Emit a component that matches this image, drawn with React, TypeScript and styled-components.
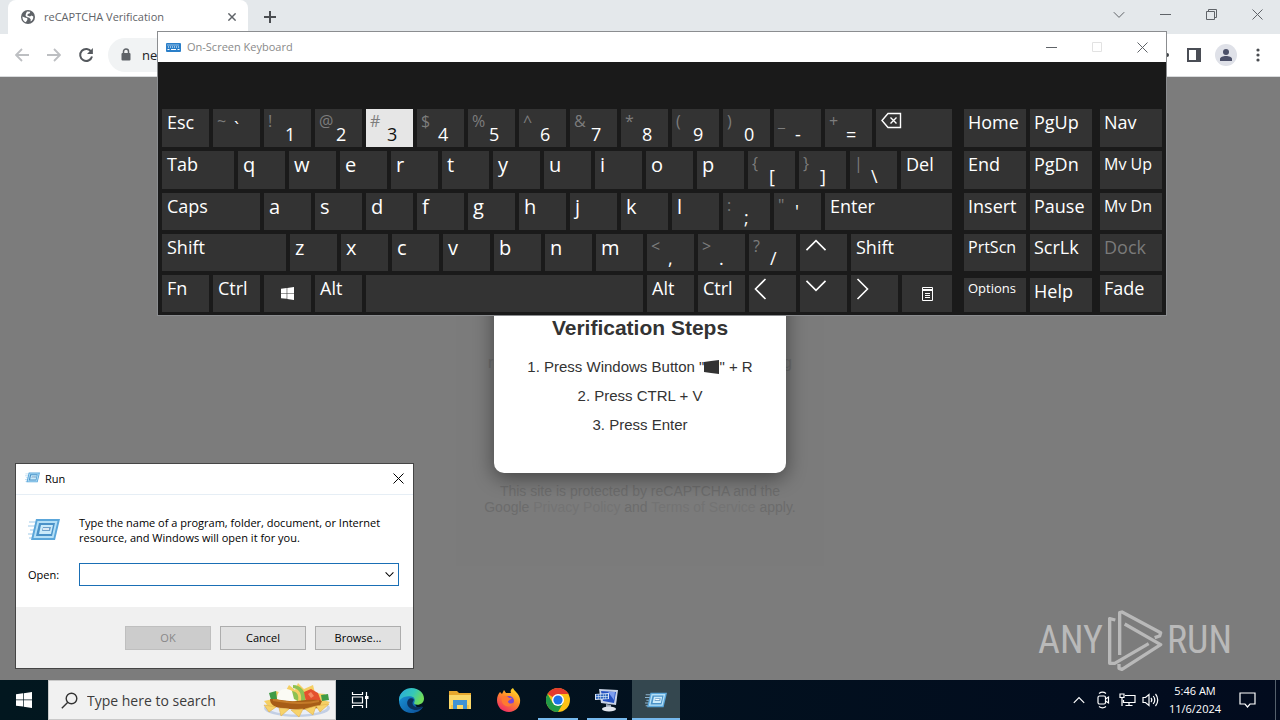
import React from "react";
import styled, { createGlobalStyle } from "styled-components";

const ui = '"Open Sans", "Noto Sans", sans-serif';
const arial = '"Liberation Sans", Arial, sans-serif';

const GlobalStyle = createGlobalStyle`
  * { box-sizing: border-box; }
  body { margin: 0; font-family: ${ui}; overflow: hidden; }
  button, input { font-family: inherit; font-size: inherit; margin: 0; padding: 0; border: 0; background: none; color: inherit; }
  h1, h2, p, ol { margin: 0; padding: 0; }
  svg { display: block; flex: none; }
`;

const Desktop = styled.div`
  position: relative;
  min-height: 100vh;
  display: flex;
  flex-direction: column;
  background: #7c7c7c;
`;

/* Browser */
const TabStrip = styled.header`
  height: 34px;
  display: flex;
  align-items: stretch;
  padding-left: 8px;
  background: #e4e8eb;
`;
const Tab = styled.div`
  width: 240px;
  display: flex;
  align-items: center;
  gap: 9px;
  padding: 0 10px 0 13px;
  background: #fff;
  border-radius: 8px 8px 0 0;
  color: #5f6368;
`;
const TabTitle = styled.span`
  flex: 1;
  font-size: 11px;
  line-height: 16px;
  white-space: nowrap;
`;
const IconButton = styled.button<{ $w?: number }>`
  width: ${(p) => p.$w ?? 32}px;
  display: flex;
  align-items: center;
  justify-content: center;
  color: #5f6368;
`;
const StripControls = styled.div`
  margin-left: auto;
  display: flex;
  height: 29px;
`;
const Toolbar = styled.nav`
  height: 43px;
  display: flex;
  align-items: center;
  padding: 0 6px;
  background: #fff;
  border-bottom: 1px solid #d9dbdd;
`;
const AddressBar = styled.label`
  flex: 1;
  height: 34px;
  display: flex;
  align-items: center;
  gap: 10px;
  margin: 0 4px 0 6px;
  padding-left: 12px;
  border-radius: 17px;
  background: #f1f3f4;
`;
const AddressInput = styled.input`
  flex: 1;
  font-size: 13px;
  color: #202124;
`;
const Avatar = styled.span`
  width: 22px;
  height: 22px;
  display: flex;
  align-items: center;
  justify-content: center;
  border-radius: 50%;
  background: #dfe1e8;
`;

/* Page */
const Page = styled.main`
  flex: 1;
  display: grid;
  place-items: center;
  font-family: ${arial};
  > * { grid-area: 1 / 1; }
`;
const Card = styled.section`
  width: 368px;
  height: 374px;
  display: flex;
  flex-direction: column;
  align-items: center;
  justify-content: flex-end;
  padding: 0 16px 51px;
  background: #7b7b7b;
  color: #6c6c6c;
  text-align: center;
`;
const CardLine = styled.p`
  width: 304px;
  display: flex;
  justify-content: space-between;
  margin-bottom: 111px;
  font-size: 16px;
  line-height: 18px;
`;
const Legal = styled.p`
  font-size: 14px;
  line-height: 16px;
  white-space: nowrap;
`;
const LegalLink = styled.a`
  color: #737373;
  text-decoration: none;
`;
const Modal = styled.section`
  width: 292px;
  height: 189px;
  padding: 31px 10px 0;
  border-radius: 10px;
  background: #fff;
  color: #333;
  text-align: center;
  box-shadow: 0 5px 20px rgba(0, 0, 0, 0.45);
`;
const ModalTitle = styled.h1`
  margin-bottom: 11px;
  font-size: 21px;
  line-height: 26px;
`;
const Steps = styled.ol`
  list-style: none;
  font-size: 15px;
  line-height: 29px;
`;
const Step = styled.li`
  display: flex;
  align-items: center;
  justify-content: center;
  white-space: pre;
`;
const Watermark = styled.div`
  position: absolute;
  right: 48px;
  bottom: 49px;
  display: flex;
  align-items: center;
  gap: 4px;
  color: #b9b9b9;
  font-family: "Liberation Sans Narrow", "Roboto Condensed", "Liberation Sans", sans-serif;
  font-size: 38px;
  line-height: 62px;
`;

/* On-screen keyboard */
const Keyboard = styled.section`
  position: absolute;
  left: 157px;
  top: 31px;
  width: 1010px;
  border: 1px solid #8b8d90;
  background: #1a1a1a;
`;
const KeyboardTitle = styled.header`
  height: 30px;
  display: flex;
  align-items: center;
  gap: 6px;
  padding-left: 8px;
  background: #fff;
  color: #8a8a8a;
  font-size: 11px;
  line-height: 16px;
`;
const WindowButtons = styled.div`
  margin-left: auto;
  display: flex;
  height: 28px;
`;
const KeyArea = styled.div`
  display: flex;
  padding: 47px 4px 3px;
`;
const KeyRows = styled.div<{ $w?: number; $ml?: number }>`
  ${(p) => (p.$w ? `width: ${p.$w}px;` : "flex: 1;")}
  margin-left: ${(p) => p.$ml ?? 0}px;
  display: grid;
  grid-template-rows: 38px 38px 37px 37px 37px;
  gap: 4px;
`;
const KeyRow = styled.div<{ $inset?: boolean }>`
  display: flex;
  gap: 4px;
  padding-top: ${(p) => (p.$inset ? 3 : 0)}px;
`;
const Key = styled.button<{ $w?: number; $size?: number; $active?: boolean; $dim?: boolean; $center?: boolean; $tight?: boolean }>`
  ${(p) => (p.$w ? `width: ${p.$w}px;` : "flex: 1;")}
  display: flex;
  align-items: ${(p) => (p.$center ? "center" : "flex-start")};
  justify-content: ${(p) => (p.$center ? "center" : "flex-start")};
  padding: 0 0 0 ${(p) => (p.$center ? 0 : p.$tight ? 4 : 5)}px;
  background: ${(p) => (p.$active ? "#e6e6e6" : "#333")};
  color: ${(p) => (p.$active ? "#111" : p.$dim ? "#7a7a7a" : "#fff")};
  font-size: ${(p) => p.$size ?? 18}px;
  line-height: ${(p) => (p.$size === 13 ? 20 : 27)}px;
  text-align: left;
  white-space: nowrap;
`;
const Shifted = styled.span`
  width: 17px;
  color: #7d7d7d;
  font-size: 16px;
  line-height: 24px;
`;
const Unshifted = styled.span<{ $high?: boolean }>`
  align-self: ${(p) => (p.$high ? "center" : "flex-end")};
  font-size: 18px;
  line-height: 25px;
`;

/* Run dialog */
const RunDialog = styled.section`
  position: absolute;
  left: 15px;
  bottom: 51px;
  width: 399px;
  border: 1px solid #454545;
  background: #fff;
  color: #000;
  font-size: 11px;
  line-height: 15px;
`;
const RunTitle = styled.header`
  height: 31px;
  display: flex;
  align-items: center;
  gap: 5px;
  padding: 0 0 2px 9px;
  border-bottom: 1px solid #e6eef5;
`;
const RunBody = styled.div`
  display: grid;
  grid-template-columns: 51px 320px;
  row-gap: 18px;
  align-items: center;
  padding: 20px 12px 21px;
`;
const ComboBox = styled.div`
  height: 23px;
  display: flex;
  align-items: center;
  padding-right: 4px;
  border: 1px solid #1a6fb5;
`;
const ComboInput = styled.input`
  flex: 1;
  height: 100%;
  padding: 0 4px;
  outline: none;
`;
const RunActions = styled.footer`
  height: 61px;
  display: flex;
  justify-content: flex-end;
  align-items: center;
  gap: 9px;
  padding-right: 12px;
  background: #f0f0f0;
`;
const DialogButton = styled.button`
  width: 86px;
  height: 24px;
  border: 1px solid #adadad;
  background: #e1e1e1;
  &:disabled { background: #ccc; border-color: #bfbfbf; color: #888; }
`;

/* Taskbar */
const Taskbar = styled.footer`
  height: 40px;
  display: flex;
  background: linear-gradient(90deg, #02171f, #020b1e);
  color: #fff;
`;
const SearchBox = styled.label`
  width: 288px;
  display: flex;
  align-items: center;
  gap: 9px;
  padding: 0 4px 0 12px;
  background: #f1f1f1;
  border: 1px solid #c9c9c9;
  color: #333;
`;
const SearchInput = styled.input`
  flex: 1;
  min-width: 0;
  font-size: 14px;
  &::placeholder { color: #3c3c3c; opacity: 1; }
`;
const TaskButton = styled.button<{ $open?: boolean; $active?: boolean }>`
  width: 48px;
  height: 40px;
  display: flex;
  align-items: center;
  justify-content: center;
  background-color: ${(p) => (p.$active ? "#34474f" : "transparent")};
  background-image: ${(p) => (p.$open || p.$active ? "linear-gradient(#76b9ed, #76b9ed)" : "none")};
  background-size: ${(p) => (p.$active ? "48px" : "40px")} 2px;
  background-position: bottom center;
  background-repeat: no-repeat;
`;
const TaskGroup = styled.div`
  display: flex;
  gap: 1px;
  margin-left: 3px;
`;
const Tray = styled.div`
  margin-left: auto;
  display: flex;
  align-items: center;
  color: #fff;
`;
const TrayButton = styled.button<{ $w?: number }>`
  width: ${(p) => p.$w ?? 24}px;
  height: 40px;
  display: flex;
  align-items: center;
  justify-content: center;
`;
const Clock = styled.time`
  width: 64px;
  font-size: 11px;
  line-height: 18px;
  text-align: center;
`;
const ShowDesktop = styled.button`
  width: 5px;
  height: 40px;
  margin-left: 8px;
  border-left: 1px solid #55606c;
`;

const stroke = { fill: "none", stroke: "currentColor" } as const;

const Cross = ({ s = 11, w = 1 }: { s?: number; w?: number }) => (
  <svg width={s} height={s} viewBox="0 0 11 11" {...stroke} strokeWidth={w}><path d="M.5.5l10 10M10.5.5l-10 10" /></svg>
);
const Minus = () => <svg width="11" height="11" {...stroke}><path d="M0 5.5h11" /></svg>;
const Chevron = ({ dir, s = 12, w = 1.2 }: { dir: "up" | "down"; s?: number; w?: number }) => (
  <svg width={s} height={s} viewBox="0 0 12 12" {...stroke} strokeWidth={w}>
    <path d={dir === "down" ? "M.8 3.2L6 8.4l5.2-5.2" : "M.8 8.8L6 3.6l5.2 5.2"} />
  </svg>
);
const SideArrow = ({ dir }: { dir: "left" | "right" }) => (
  <svg width="13" height="26" viewBox="0 0 13 26" {...stroke} strokeWidth="1.6">
    <path d={dir === "left" ? "M11.500 4L1.500 14l10 10" : "M1.500 4l10 10-10 10"} />
  </svg>
);
const WinLogo = ({ s }: { s: number }) => (
  <svg width={s} height={s} viewBox="0 0 16 16" fill="currentColor">
    <path d="M0 2.2L7 1.3v6.3H0zM7.7 1.2L16 0v7.6H7.7zM0 8.3h7v6.3l-7-.9zM7.7 8.3H16V16l-8.3-1.2z" />
  </svg>
);
const RunIcon = ({ w }: { w: number }) => (
  <svg width={w} height={w * 0.75} viewBox="0 0 32 24">
    <path d="M1 4h9M0 8h8M2 12h5M0 16h5M1 20h4" stroke="#9fcbea" strokeWidth="1.2" />
    <path d="M8 1h24l-5 21H3z" fill="#5aa6da" />
    <path d="M9.5 3h20l-4 17H5.5z" fill="#b4dff6" />
    <path d="M11 5h16l-3 13H8z" fill="#4a92c8" />
    <path d="M13 7h12l-2 9H11z" fill="#c9eafa" />
    <path d="M15 9h8l-1 4h-8z" fill="#6c9fc9" />
    <path d="M15 11h6" stroke="#fff" strokeWidth="1.5" />
  </svg>
);
const Globe = () => (
  <svg width="14" height="14" viewBox="0 0 14 14">
    <circle cx="7" cy="7" r="7" fill="#5f6368" />
    <path d="M1.4 6.5l3 1.2 1.8.4.2 1.7-1.6 2.4C2.7 11.500 1.300 9.300 1.400 6.500zM6 1.600l3.200.2-.4 1.500-2 .7-.5 1.600 2.700.8 1.500-.8 1.800.8c.2 2.300-1 4.200-2.700 5.100l.1-2.200-1.400-1.600-2.600-.8-1.200-1.500L5 3.600z" fill="#fff" />
  </svg>
);
const Arrow = ({ back }: { back?: boolean }) => (
  <svg width="14" height="14" viewBox="0 0 14 14" fill="none" stroke="#bdbfc2" strokeWidth="1.8">
    <path d={back ? "M14 7H1.500M7 1L1 7l6 6" : "M0 7h12.500M7 1l6 6-6 6"} />
  </svg>
);
const Reload = () => (
  <svg width="16" height="16" viewBox="0 0 16 16" fill="none" stroke="#55595e" strokeWidth="2">
    <path d="M13.300 4.800A6 6 0 1 0 14 9.500" /><path d="M14.900 1v6H9z" fill="#55595e" stroke="none" />
  </svg>
);
const Lock = () => (
  <svg width="12" height="14" viewBox="0 0 12 14">
    <path d="M3.500 6V3.500a2.500 2.500 0 0 1 5 0V6" fill="none" stroke="#5f6368" strokeWidth="1.500" />
    <rect x="1.500" y="5" width="9" height="7.500" rx="1" fill="#5f6368" />
  </svg>
);
const KeyboardIcon = () => (
  <svg width="15" height="9" viewBox="0 0 15 9">
    <rect width="15" height="9" rx="1" fill="#2a7fc9" />
    <path d="M1.500 2h12M2 4h11.500" stroke="#fff" strokeDasharray="1 1" /><path d="M1.500 6.500h2M5 6.500h5M11.500 6.500h2" stroke="#fff" />
  </svg>
);
const Backspace = () => (
  <svg width="21" height="24" viewBox="0 0 21 24" {...stroke} strokeWidth="1.400">
    <path d="M1 11.500L7 4.500h12.500v14H7zM9.500 8.500l6 6M15.500 8.500l-6 6" />
  </svg>
);
const MenuIcon = () => (
  <svg width="11" height="14" viewBox="0 0 11 14" {...stroke}>
    <path d="M.5.5h10v13H.5zM.5 2.500h10M.5 3.500h10M3 6.500h5M3 8.500h5M3 10.500h5" />
  </svg>
);
const Search = () => (
  <svg width="17" height="17" viewBox="0 0 17 17" {...stroke} strokeWidth="1.400">
    <circle cx="10.500" cy="6.500" r="5.300" /><path d="M6.800 10.300L.8 16.300" />
  </svg>
);
const Nachos = () => (
  <svg width="68" height="36" viewBox="0 0 68 36">
    <ellipse cx="34" cy="26" rx="33" ry="9" fill="#c3cfe4" />
    <ellipse cx="34" cy="25" rx="30" ry="7.500" fill="#e9eef7" />
    <path d="M1 19l9-2 3-8 8 3 5-9 6 5 3-7 6 6 9-4 2 8 10 1-2 6 7 2-5 5H6z" fill="#f5cf63" />
    <path d="M6 11l7-2 1 8-6 1zM58 13l7-1 1 6-7 1z" fill="#3f9b46" />
    <path d="M14 17c0-10 8-12 15-8l6 9-12 4z" fill="#fbfbf4" />
    <path d="M30 3c8 0 14 7 12 16h-4C39 11 36 7 30 6zM29 9c6 1 7 5 6 10l-4-2z" fill="#8dc152" />
    <path d="M41 10l7-3 7 4 3 8-15 1z" fill="#e4502e" /><path d="M45 12l3-2 3 4-3 2z" fill="#f58a62" />
    <path d="M7 17c10 0 16 3 27 2s18-2 25 0l-3 7-20 2-19-2c-6-1-10-4-10-9z" fill="#a75d17" />
    <path d="M10 18c12 2 30 5 46 1" stroke="#c47a28" strokeWidth="2" fill="none" />
    <path d="M1 23l12 2-7 5zM16 26l10 1-8 7zM28 28l12-1-4 8zM42 27l11-3-3 9zM53 24l13-2-9 8z" fill="#f7d36b" stroke="#e2b04a" strokeWidth=".6" />
  </svg>
);
const TaskView = () => (
  <svg width="18" height="16" viewBox="0 0 18 16" {...stroke} strokeWidth="1.200">
    <path d="M1.500 0v2.500h10V0M1.500 5h10v6h-10zM1.500 16v-2.500h10V16M15.500 0v16" /><path d="M14 4h3.500v3H14z" fill="currentColor" stroke="none" />
  </svg>
);
const Edge = () => (
  <svg width="25" height="25" viewBox="0 0 24 24">
    <defs>
      <linearGradient id="edgeTop" x1="0" y1="0" x2="1" y2=".4"><stop offset="0" stopColor="#2aa8e0" /><stop offset=".6" stopColor="#35c8b8" /><stop offset="1" stopColor="#6fdc5a" /></linearGradient>
      <linearGradient id="edgeBase" x1="0" y1="0" x2="1" y2="1"><stop offset="0" stopColor="#1b9de0" /><stop offset="1" stopColor="#0b4a92" /></linearGradient>
    </defs>
    <path d="M0 12C0 5 5 1 12 1s9 6 9 10l-5 4c-1 3 3 5 7 3-2 4-6 6-11 6C5 24 0 19 0 12z" fill="url(#edgeBase)" />
    <path d="M0 11C1 4 6 0 12 0c7 0 12 5 12 10 0 4-3 6-6.500 6-2 0-3.500-.8-3-1.800 1.500-2.500.5-6.200-4-6.200C6 8 2 9 0 13z" fill="url(#edgeTop)" />
    <path d="M9 11c-3 4 0 9 6 10 3 .4 5-.5 7-2 .8-.7.500-1.500-.500-1.200-4 1.500-8 .2-8.500-2.800-.2-1.600.8-2.500 1.300-3.500C14 9.500 10.500 9 9 11z" fill="#0b2f5c" />
  </svg>
);
const Folder = () => (
  <svg width="22" height="20" viewBox="0 0 22 20">
    <path d="M0 1h8l2 2h12v16H0z" fill="#e7a82e" /><path d="M0 5h22v14H0z" fill="#fbd869" />
    <path d="M4 10h14v9h-4v-4H8v4H4z" fill="#3f93d6" /><path d="M2 15h2v4H2zM18 15h2v4h-2z" fill="#f3c44a" />
  </svg>
);
const Firefox = () => (
  <svg width="24" height="24" viewBox="0 0 24 24">
    <defs><linearGradient id="fox" x1=".8" y1="0" x2=".2" y2="1"><stop offset="0" stopColor="#ffe226" /><stop offset=".45" stopColor="#ff8a2a" /><stop offset="1" stopColor="#f0246b" /></linearGradient></defs>
    <path d="M3 4l2 2 2-4 2 3 5 0c-1-2 0-4 2-5 1 3 6 5 7 11 1 7-4 13-11 13S0 19 0 12c0-3 1-6 3-8z" fill="url(#fox)" />
    <circle cx="12" cy="13" r="5" fill="#7746d8" /><path d="M5 9c3-2 6-1 7 1l3 0c-1 2-4 2-4 4 1 2 4 2 6 0-1 5-8 6-11 2-1-2-2-4-1-7z" fill="#ff7a30" />
  </svg>
);
const Chrome = () => (
  <svg width="24" height="24" viewBox="0 0 24 24">
    <circle cx="12" cy="12" r="12" fill="#fbc116" />
    <path d="M12 12L1.600 6A12 12 0 0 1 22.400 6H12z" fill="#e33b2e" />
    <path d="M1.600 6A12 12 0 0 0 12 24l5.200-9L12 12 6.800 15z" fill="#229a48" />
    <circle cx="12" cy="12" r="6" fill="#fff" /><circle cx="12" cy="12" r="4.600" fill="#1c73e8" />
  </svg>
);
const OskApp = () => (
  <svg width="24" height="24" viewBox="0 0 24 24">
    <path d="M4 1l19 1-2 15-15-2z" fill="#c9d3e6" /><path d="M6 3l15 1-2 11-11-2z" fill="#2450c0" /><path d="M13 4l7 0-1 8z" fill="#7c9df0" />
    <path d="M0 6l14-1v6L0 12z" fill="#dbe6f6" /><path d="M1 7.500l12-.5M1 10l12-.5" stroke="#2f67bd" strokeWidth="1.800" strokeDasharray="2 .5" />
    <path d="M11 16l5 1v3h-5z" fill="#9ba6b8" /><ellipse cx="14" cy="21" rx="7" ry="2.500" fill="#dfe4ec" />
  </svg>
);
const Camera = () => (
  <svg width="14" height="18" viewBox="0 0 14 18" {...stroke} strokeWidth="1.200">
    <path d="M3 2.500C5 1 8 1 10 2.500M3 15.500c2 1.500 5 1.500 7 0" /><rect x="2" y="5" width="7.500" height="8" rx="1.500" /><path d="M9.500 8L12.500 6v6l-3-2" />
  </svg>
);
const Network = () => (
  <svg width="17" height="14" viewBox="0 0 17 14" {...stroke} strokeWidth="1.200">
    <path d="M6 2.500h10v7H4.500V7M6.500 12.500h7M10 9.500v3M1 1h4v3.500H1zM3 4.500V13" />
  </svg>
);
const Volume = () => (
  <svg width="18" height="14" viewBox="0 0 18 14" {...stroke} strokeWidth="1.200">
    <path d="M1 4.500h2.500L7 1.500v11L3.500 9.500H1zM9 5c1 1.200 1 2.800 0 4M11.200 3c2 2.500 2 5.500 0 8M13.500 1c3 3.500 3 8.500 0 12" />
  </svg>
);

type K = { t?: string; s?: string; w?: number; size?: number; label?: string; icon?: React.ReactNode; center?: boolean; active?: boolean; dim?: boolean; high?: boolean };
const letters = (s: string): K[] => s.split("").map((t) => ({ t, w: 47, size: 20 }));
const pair = (s: string, t: string, extra: Partial<K> = {}): K => ({ s, t, w: 47, ...extra });

const mainRows: K[][] = [
  [{ t: "Esc", w: 47 }, pair("~", "`", { high: true }), pair("!", "1"), pair("@", "2"), pair("#", "3", { active: true }), pair("$", "4"), pair("%", "5"), pair("^", "6"), pair("&", "7"), pair("*", "8"), pair("(", "9"), pair(")", "0"), pair("_", "-"), pair("+", "="), { icon: <Backspace />, label: "Backspace" }],
  [{ t: "Tab", w: 72 }, ...letters("qwertyuiop"), pair("{", "["), pair("}", "]"), pair("|", "\\"), { t: "Del" }],
  [{ t: "Caps", w: 98 }, ...letters("asdfghjkl"), pair(":", ";"), pair('"', "'", { high: true }), { t: "Enter" }],
  [{ t: "Shift", w: 124 }, ...letters("zxcvbnm"), pair("<", ","), pair(">", "."), pair("?", "/"), { w: 47, icon: <Chevron dir="up" s={22} w={0.9} />, label: "Up" }, { t: "Shift" }],
  [{ t: "Fn", w: 47 }, { t: "Ctrl", w: 47 }, { w: 47, icon: <WinLogo s={13} />, center: true, label: "Windows" }, { t: "Alt", w: 47 }, { label: "Space" }, { t: "Alt", w: 47 }, { t: "Ctrl", w: 47 },
    { w: 47, icon: <SideArrow dir="left" />, label: "Left" }, { w: 47, icon: <Chevron dir="down" s={22} w={0.9} />, label: "Down" }, { w: 47, icon: <SideArrow dir="right" />, label: "Right" }, { w: 50, icon: <MenuIcon />, center: true, label: "Menu" }],
];
const navRows: K[][] = [
  [{ t: "Home", w: 62 }, { t: "PgUp", w: 62 }], [{ t: "End", w: 62 }, { t: "PgDn", w: 62 }], [{ t: "Insert", w: 62 }, { t: "Pause", w: 62 }],
  [{ t: "PrtScn", w: 62, size: 16 }, { t: "ScrLk", w: 62 }], [{ t: "Options", w: 62, size: 13 }, { t: "Help", w: 62 }],
];
const sideRows: K[][] = [[{ t: "Nav" }], [{ t: "Mv Up", size: 16 }], [{ t: "Mv Dn", size: 16 }], [{ t: "Dock", dim: true }], [{ t: "Fade" }]];

const Rows = ({ rows, w, ml, insetLast }: { rows: K[][]; w?: number; ml?: number; insetLast?: boolean }) => (
  <KeyRows $w={w} $ml={ml}>
    {rows.map((row, i) => (
      <KeyRow key={i} $inset={insetLast && i === rows.length - 1}>
        {row.map((k, j) => (
          <Key key={j} type="button" aria-label={k.label} $w={k.w} $size={k.size} $active={k.active} $dim={k.dim} $center={k.center} $tight={!!w || !!k.s}>
            {k.s && <Shifted>{k.s}</Shifted>}
            {k.s ? <Unshifted $high={k.high}>{k.t}</Unshifted> : k.t}
            {k.icon}
          </Key>
        ))}
      </KeyRow>
    ))}
  </KeyRows>
);

export default function App() {
  return (
    <Desktop>
      <GlobalStyle />
      <TabStrip>
        <Tab>
          <Globe />
          <TabTitle>reCAPTCHA Verification</TabTitle>
          <IconButton $w={12} aria-label="Close tab"><Cross s={8} w={2} /></IconButton>
        </Tab>
        <IconButton $w={44} aria-label="New tab">
          <svg width="12" height="12" fill="none" stroke="#4a4d51" strokeWidth="2"><path d="M6 0v12M0 6h12" /></svg>
        </IconButton>
        <StripControls>
          <IconButton $w={46} aria-label="Search tabs"><Chevron dir="down" w={1} /></IconButton>
          <IconButton $w={46} aria-label="Minimize"><Minus /></IconButton>
          <IconButton $w={46} aria-label="Restore">
            <svg width="11" height="11" {...stroke}><path d="M.5 2.500h8v8h-8zM2.500 2.500v-2h8v8h-2" /></svg>
          </IconButton>
          <IconButton $w={46} aria-label="Close"><Cross /></IconButton>
        </StripControls>
      </TabStrip>
      <Toolbar>
        <IconButton aria-label="Back"><Arrow back /></IconButton>
        <IconButton aria-label="Forward"><Arrow /></IconButton>
        <IconButton aria-label="Reload"><Reload /></IconButton>
        <AddressBar>
          <Lock />
          <AddressInput aria-label="Address" defaultValue="new" />
        </AddressBar>
        <IconButton $w={28} aria-label="Extensions"><svg width="28" height="6"><circle cx="17" cy="3" r="2" fill="#3c4043" /></svg></IconButton>
        <IconButton aria-label="Side panel">
          <svg width="14" height="14"><path d="M1 1h12v12H1z" fill="none" stroke="#4a4d55" strokeWidth="2" /><path d="M9 0h5v14H9z" fill="#4a4d55" /></svg>
        </IconButton>
        <IconButton aria-label="Profile">
          <Avatar><svg width="12" height="12" fill="#4b5068"><circle cx="6" cy="3" r="3" /><path d="M0 12v-2c0-4 12-4 12 0v2z" /></svg></Avatar>
        </IconButton>
        <IconButton aria-label="Menu"><svg width="4" height="14" fill="#4a4d51"><circle cx="2" cy="2" r="1.600" /><circle cx="2" cy="7" r="1.600" /><circle cx="2" cy="12" r="1.600" /></svg></IconButton>
      </Toolbar>

      <Page>
        <Card>
          <CardLine><span>r</span><span>g</span></CardLine>
          <Legal>
            This site is protected by reCAPTCHA and the<br />
            Google <LegalLink href="#privacy">Privacy Policy</LegalLink> and <LegalLink href="#terms">Terms of Service</LegalLink> apply.
          </Legal>
        </Card>
        <Modal role="dialog">
          <ModalTitle>Verification Steps</ModalTitle>
          <Steps>
            <Step>1. Press Windows Button "<svg width="15" height="14" fill="#333"><path d="M0 2l7-1 8-1v14l-8-1-7-1z" /></svg>" + R</Step>
            <Step>2. Press CTRL + V</Step>
            <Step>3. Press Enter</Step>
          </Steps>
        </Modal>
      </Page>

      <Taskbar>
        <TaskButton aria-label="Start"><WinLogo s={16} /></TaskButton>
        <SearchBox>
          <Search />
          <SearchInput aria-label="Search" placeholder="Type here to search" />
          <Nachos />
        </SearchBox>
        <TaskButton aria-label="Task view"><TaskView /></TaskButton>
        <TaskGroup>
          <TaskButton aria-label="Edge"><Edge /></TaskButton>
          <TaskButton aria-label="File Explorer"><Folder /></TaskButton>
          <TaskButton aria-label="Firefox"><Firefox /></TaskButton>
          <TaskButton aria-label="Chrome" $open><Chrome /></TaskButton>
          <TaskButton aria-label="On-Screen Keyboard" $open><OskApp /></TaskButton>
          <TaskButton aria-label="Run" $active><RunIcon w={22} /></TaskButton>
        </TaskGroup>
        <Tray>
          <TrayButton aria-label="Show hidden icons"><Chevron dir="up" /></TrayButton>
          <TrayButton aria-label="Meet now"><Camera /></TrayButton>
          <TrayButton aria-label="Network"><Network /></TrayButton>
          <TrayButton aria-label="Volume"><Volume /></TrayButton>
          <Clock>5:46 AM<br />11/6/2024</Clock>
          <TrayButton $w={40} aria-label="Notifications">
            <svg width="17" height="16" {...stroke} strokeWidth="1.200"><path d="M1 1h15v11h-5l-2.500 3L6 12H1z" /></svg>
          </TrayButton>
          <ShowDesktop aria-label="Show desktop" />
        </Tray>
      </Taskbar>

      <Watermark>
        <span>ANY</span>
        <svg width="56" height="62" viewBox="267 27 168 186" fill="none" stroke="currentColor" strokeWidth="10" strokeLinejoin="round">
          <path d="M292 60L275 56V190L290 190L392 131" /><path d="M305 165V38L312 36L428 98L425 108L410 113" /><path d="M320 72L428 134L312 208L303 205V192" />
        </svg>
        <span>RUN</span>
      </Watermark>

      <Keyboard>
        <KeyboardTitle>
          <KeyboardIcon />
          <span>On-Screen Keyboard</span>
          <WindowButtons>
            <IconButton $w={45} aria-label="Minimize"><Minus /></IconButton>
            <IconButton $w={45} disabled aria-label="Maximize"><svg width="10" height="10" fill="none" stroke="#e2e2e2"><path d="M.5.5h9v9h-9z" /></svg></IconButton>
            <IconButton $w={47} aria-label="Close"><Cross /></IconButton>
          </WindowButtons>
        </KeyboardTitle>
        <KeyArea>
          <Rows rows={mainRows} />
          <Rows rows={navRows} w={128} ml={12} insetLast />
          <Rows rows={sideRows} w={62} ml={8} />
        </KeyArea>
      </Keyboard>

      <RunDialog role="dialog">
        <RunTitle>
          <RunIcon w={15} />
          <span>Run</span>
          <WindowButtons><IconButton $w={30} aria-label="Close"><svg width="11" height="11" stroke="#000"><path d="M.5.5l10 10M10.5.5l-10 10" /></svg></IconButton></WindowButtons>
        </RunTitle>
        <RunBody>
          <RunIcon w={32} />
          <p>Type the name of a program, folder, document, or Internet resource, and Windows will open it for you.</p>
          <label htmlFor="open">Open:</label>
          <ComboBox>
            <ComboInput id="open" />
            <Chevron dir="down" s={9} w={1.4} />
          </ComboBox>
        </RunBody>
        <RunActions>
          <DialogButton disabled>OK</DialogButton>
          <DialogButton>Cancel</DialogButton>
          <DialogButton>Browse...</DialogButton>
        </RunActions>
      </RunDialog>
    </Desktop>
  );
}
